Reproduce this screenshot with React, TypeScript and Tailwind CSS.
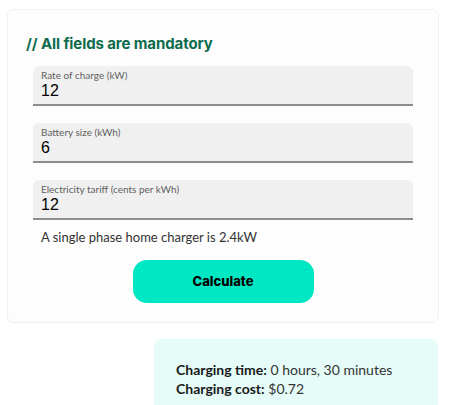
import { useState } from "react";

const fields = [
  { label: "Rate of charge (kW)", value: "12" },
  { label: "Battery size (kWh)", value: "6" },
  { label: "Electricity tariff (cents per kWh)", value: "12" },
];

export default function App() {
  const [values, setValues] = useState(fields.map((f) => f.value));

  return (
    <div className="min-h-screen bg-white font-['Lato',sans-serif] pt-[9px] px-[7px] overflow-hidden">
      {/* Form card */}
      <div className="w-[432px] h-[314px] border border-[#f0f0f0] rounded-md bg-[#fdfdfd] px-[18px] pt-[24px]">
        <h2 className="font-['Inter',sans-serif] text-[15px] font-bold text-[#0d6b4d] leading-5 tracking-[-0.1px]">
          // All fields are mandatory
        </h2>
        <div className="mx-[7px] mt-[12px] flex flex-col gap-[17px]">
          {fields.map((f, i) => (
            <label
              key={f.label}
              className="block h-[40px] bg-[#f0f0f0] rounded-t-md border-b-2 border-[#8c8c8c] px-2 pt-[3px]"
            >
              <span className="block text-[10px] leading-3 text-[#5f5f5f]">{f.label}</span>
              <input
                value={values[i]}
                onChange={(e) => {
                  const next = [...values];
                  next[i] = e.target.value;
                  setValues(next);
                }}
                className="block w-full bg-transparent outline-none text-[16px] leading-5 text-black font-['Liberation_Sans',sans-serif]"
              />
            </label>
          ))}
        </div>
        <p className="mx-[7px] px-2 mt-[7px] text-[13px] leading-5 text-[#333]">
          A single phase home charger is 2.4kW
        </p>
        <div className="flex justify-center mt-[13px]">
          <button className="w-[181px] h-[43px] rounded-[14px] bg-[#00e8c3] font-['Inter',sans-serif] text-[13px] font-extrabold text-black">
            Calculate
          </button>
        </div>
      </div>

      {/* Result */}
      <div className="flex justify-end mt-[16px] mr-[5px]">
        <div className="w-[284px] h-[80px] rounded-lg bg-[#e5fcf8] pl-[22px] pt-[21px] text-[14px] leading-[19px] text-[#333]">
          <p>
            <span className="font-bold text-[#1a1a1a]">Charging time:</span> 0 hours, 30 minutes
          </p>
          <p>
            <span className="font-bold text-[#1a1a1a]">Charging cost:</span> $0.72
          </p>
        </div>
      </div>
    </div>
  );
}
